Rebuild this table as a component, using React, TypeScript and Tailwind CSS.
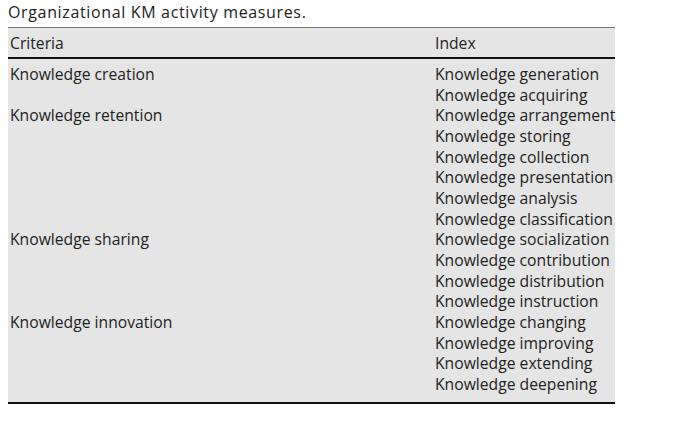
const groups: { criteria: string; indexes: string[] }[] = [
  { criteria: "Knowledge creation", indexes: ["Knowledge generation", "Knowledge acquiring"] },
  {
    criteria: "Knowledge retention",
    indexes: [
      "Knowledge arrangement",
      "Knowledge storing",
      "Knowledge collection",
      "Knowledge presentation",
      "Knowledge analysis",
      "Knowledge classification",
    ],
  },
  {
    criteria: "Knowledge sharing",
    indexes: [
      "Knowledge socialization",
      "Knowledge contribution",
      "Knowledge distribution",
      "Knowledge instruction",
    ],
  },
  {
    criteria: "Knowledge innovation",
    indexes: ["Knowledge changing", "Knowledge improving", "Knowledge extending", "Knowledge deepening"],
  },
];

export default function App() {
  return (
    <div
      className="h-[421px] w-[680px] overflow-hidden bg-white text-[15.7px] text-[#222]"
      style={{ fontFamily: '"Open Sans", sans-serif' }}
    >
      <div className="pl-[8px] pt-[1px] text-[16px] leading-[22px] tracking-[0.65px]">
        Organizational KM activity measures.
      </div>
      <div className="ml-[8px] mt-[4px] w-[607px] bg-[#e5e5e5]">
        <div className="grid grid-cols-[425px_1fr] border-t-[1.5px] border-b-[2px] border-t-[#777] border-b-[#111] pb-[2px] pt-[4px] leading-[23px]">
          <div className="pl-[2px]">Criteria</div>
          <div className="pl-[2px]">Index</div>
        </div>
        <div className="border-b-[2px] border-b-[#111] pb-[7px] pt-[5px] leading-[20.66px]">
          {groups.map((g) => (
            <div key={g.criteria} className="grid grid-cols-[425px_1fr]">
              <div className="pl-[2px]">{g.criteria}</div>
              <div className="pl-[2px]">
                {g.indexes.map((i) => (
                  <div key={i} className="whitespace-nowrap">
                    {i}
                  </div>
                ))}
              </div>
            </div>
          ))}
        </div>
      </div>
    </div>
  );
}
